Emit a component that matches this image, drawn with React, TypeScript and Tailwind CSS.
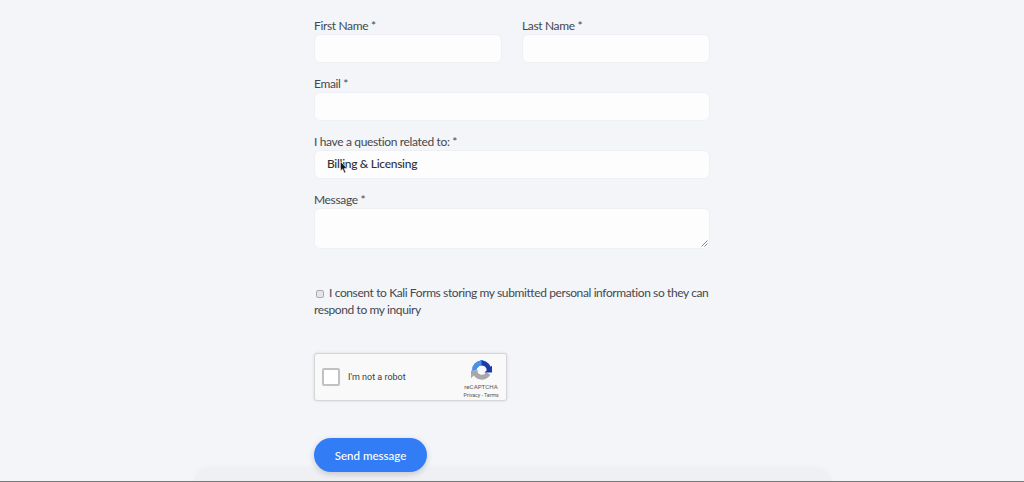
const inputClass = 'h-[29px] w-full rounded-[6px] border border-[#eef0f3] bg-[#fdfdfd] block'

function Field({ label, className, children }: { label: string; className?: string; children?: React.ReactNode }) {
  return (
    <div className={className}>
      <div className="h-[18px] text-[12px] leading-[19px] tracking-[-0.35px] text-[#45484d]">{label}</div>
      {children ?? <div className={inputClass} />}
    </div>
  )
}

function RecaptchaLogo() {
  return (
    <svg width="21" height="21" viewBox="0 0 22 22" fill="none">
      <path d="M4 12 A7.5 7.5 0 0 0 18 14" stroke="#a8a8a8" strokeWidth="5" />
      <path d="M0 11 H8 L0 19 Z" fill="#a8a8a8" />
      <path d="M3.5 11 A7.5 7.5 0 0 1 11 3" stroke="#4a90e8" strokeWidth="5" />
      <path d="M10 0 H13 V6 H9 L7 8 H3 Z" fill="#4a90e8" />
      <path d="M11 3 A8 8 0 0 1 19 11" stroke="#1c3aa9" strokeWidth="5" />
      <path d="M22 6 V13 H14 Z" fill="#1c3aa9" />
    </svg>
  )
}

export default function App() {
  return (
    <div className="relative h-[482px] w-[1024px] overflow-hidden bg-[#f3f5f9] font-['Lato','Noto_Sans',sans-serif]">
      {/* card edge below the form */}
      <div className="absolute left-[195px] top-[468px] h-[30px] w-[635px] rounded-[14px] bg-[#eff0f4] shadow-[0_0_6px_rgba(0,0,0,0.04)]" />
      <div className="absolute bottom-0 left-0 h-px w-full bg-[#77787a]" />

      <div className="relative ml-[314px] flex w-[396px] flex-col pt-[16px]">
        <div className="flex gap-[20px]">
          <Field label="First Name *" className="flex-1" />
          <Field label="Last Name *" className="flex-1" />
        </div>
        <Field label="Email *" className="mt-[11px]" />
        <Field label="I have a question related to: *" className="mt-[11px]">
          <div className={`${inputClass} pl-[12px] text-[12px] leading-[26px] font-medium tracking-[-0.3px] text-[#2f3237]`}>
            Billing &amp; Licensing
          </div>
        </Field>
        <Field label="Message *" className="mt-[11px]">
          <div className="relative h-[41px] w-full rounded-[6px] border border-[#eef0f3] bg-[#fdfdfd]">
            <svg className="absolute bottom-px right-px" width="7" height="7" viewBox="0 0 7 7" stroke="#6b6b6b" strokeWidth="0.8">
              <path d="M0.5 6.5 L6.5 0.5 M3.5 6.5 L6.5 3.5" />
            </svg>
          </div>
        </Field>

        <div className="mt-[35px] text-[12px] leading-[17px] tracking-[-0.39px] text-[#45484d]">
          <input
            type="checkbox"
            readOnly
            className="mr-[5px] ml-[2px] inline-block h-[8px] w-[8px] appearance-none rounded-[2px] border border-[#a9abaf] bg-[#e4e5e8] align-[-0.5px]"
          />
          I consent to Kali Forms storing my submitted personal information so they can respond to my inquiry
        </div>

        <div className="mt-[35px] flex h-[48px] w-[193px] items-center rounded-[3px] border border-[#d6d6d6] bg-[#f9f9f9] shadow-[0_0_3px_rgba(0,0,0,0.12)]">
          <div className="ml-[7px] h-[18px] w-[18px] rounded-[2px] border-2 border-[#c1c1c1] bg-white" />
          <span className="ml-[8px] pt-[2px] font-['Roboto',sans-serif] text-[9px] text-[#3c3c3c]">I'm not a robot</span>
          <div className="ml-auto mr-[7px] flex w-[36px] flex-col items-center pt-[4px]">
            <RecaptchaLogo />
            <span className="mt-[2px] font-['Roboto',sans-serif] text-[6.2px] leading-[8px] text-[#555]">reCAPTCHA</span>
            <span className="font-['Roboto',sans-serif] text-[5.2px] leading-[8px] text-[#555]">Privacy - Terms</span>
          </div>
        </div>

        <button className="mt-[37px] h-[34px] w-[113px] rounded-full bg-[#327cf5] pt-[1px] text-[11.5px] font-medium text-white shadow-[0_2px_6px_rgba(0,0,0,0.18)]">
          Send message
        </button>
      </div>

      {/* mouse pointer */}
      <svg className="absolute left-[340px] top-[161px]" width="8" height="13" viewBox="0 0 8 13">
        <path d="M0.5 0.5 V10 L2.6 8 L4.2 12 L5.8 11.3 L4.2 7.6 H7.2 Z" fill="#1a1a1a" stroke="#fff" strokeWidth="0.6" />
      </svg>
    </div>
  )
}
